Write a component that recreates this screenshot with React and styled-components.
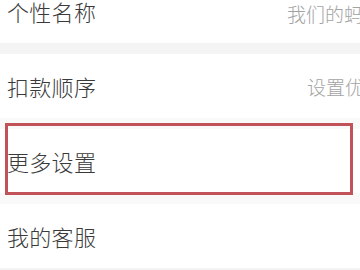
import React from "react";
import styled, { createGlobalStyle } from "styled-components";

const Global = createGlobalStyle`
  html, body { margin: 0; padding: 0; background: #f6f6f6; overflow: hidden; }
  body { font-family: "Noto Sans CJK SC", "Noto Sans", sans-serif; }
`;

const List = styled.div`
  display: flex;
  flex-direction: column;
  margin-top: -21px;
  width: 360px;
`;

const Gap = styled.div`
  height: 11px;
  background: ${(p) => p.$tone || "#f4f4f4"};
`;

const Row = styled.div`
  position: relative;
  display: flex;
  align-items: center;
  height: 64px;
  padding-left: 7px;
  background: #ffffff;
`;

const Label = styled.span`
  flex: 1;
  font-size: 22px;
  font-weight: 300;
  color: #3a3a3a;
  white-space: nowrap;
  letter-spacing: 0.3px;
`;

const Value = styled.span`
  flex: 0 0 ${(p) => p.$w}px;
  overflow: hidden;
  white-space: nowrap;
  font-size: 19px;
  font-weight: 300;
  color: #a3a3a3;
  margin-top: ${(p) => p.$dy || 0}px;
`;

const Highlight = styled.div`
  position: absolute;
  left: 5px;
  right: 7px;
  top: -6px;
  bottom: -2px;
  border: 3px solid #c2525a;
  pointer-events: none;
`;

export default function App() {
  return (
    <>
      <Global />
      <List>
        <Row>
          <Label>个性名称</Label>
          <Value $w={73} $dy={4}>我们的蚂蚁窝</Value>
        </Row>
        <Gap />
        <Row>
          <Label>扣款顺序</Label>
          <Value $w={53}>设置优先扣款</Value>
        </Row>
        <Gap $tone="#f9f9f9" />
        <Row>
          <Label>更多设置</Label>
          <Highlight />
        </Row>
        <Gap $tone="#f9f9f9" />
        <Row>
          <Label>我的客服</Label>
        </Row>
        <Gap />
      </List>
    </>
  );
}
